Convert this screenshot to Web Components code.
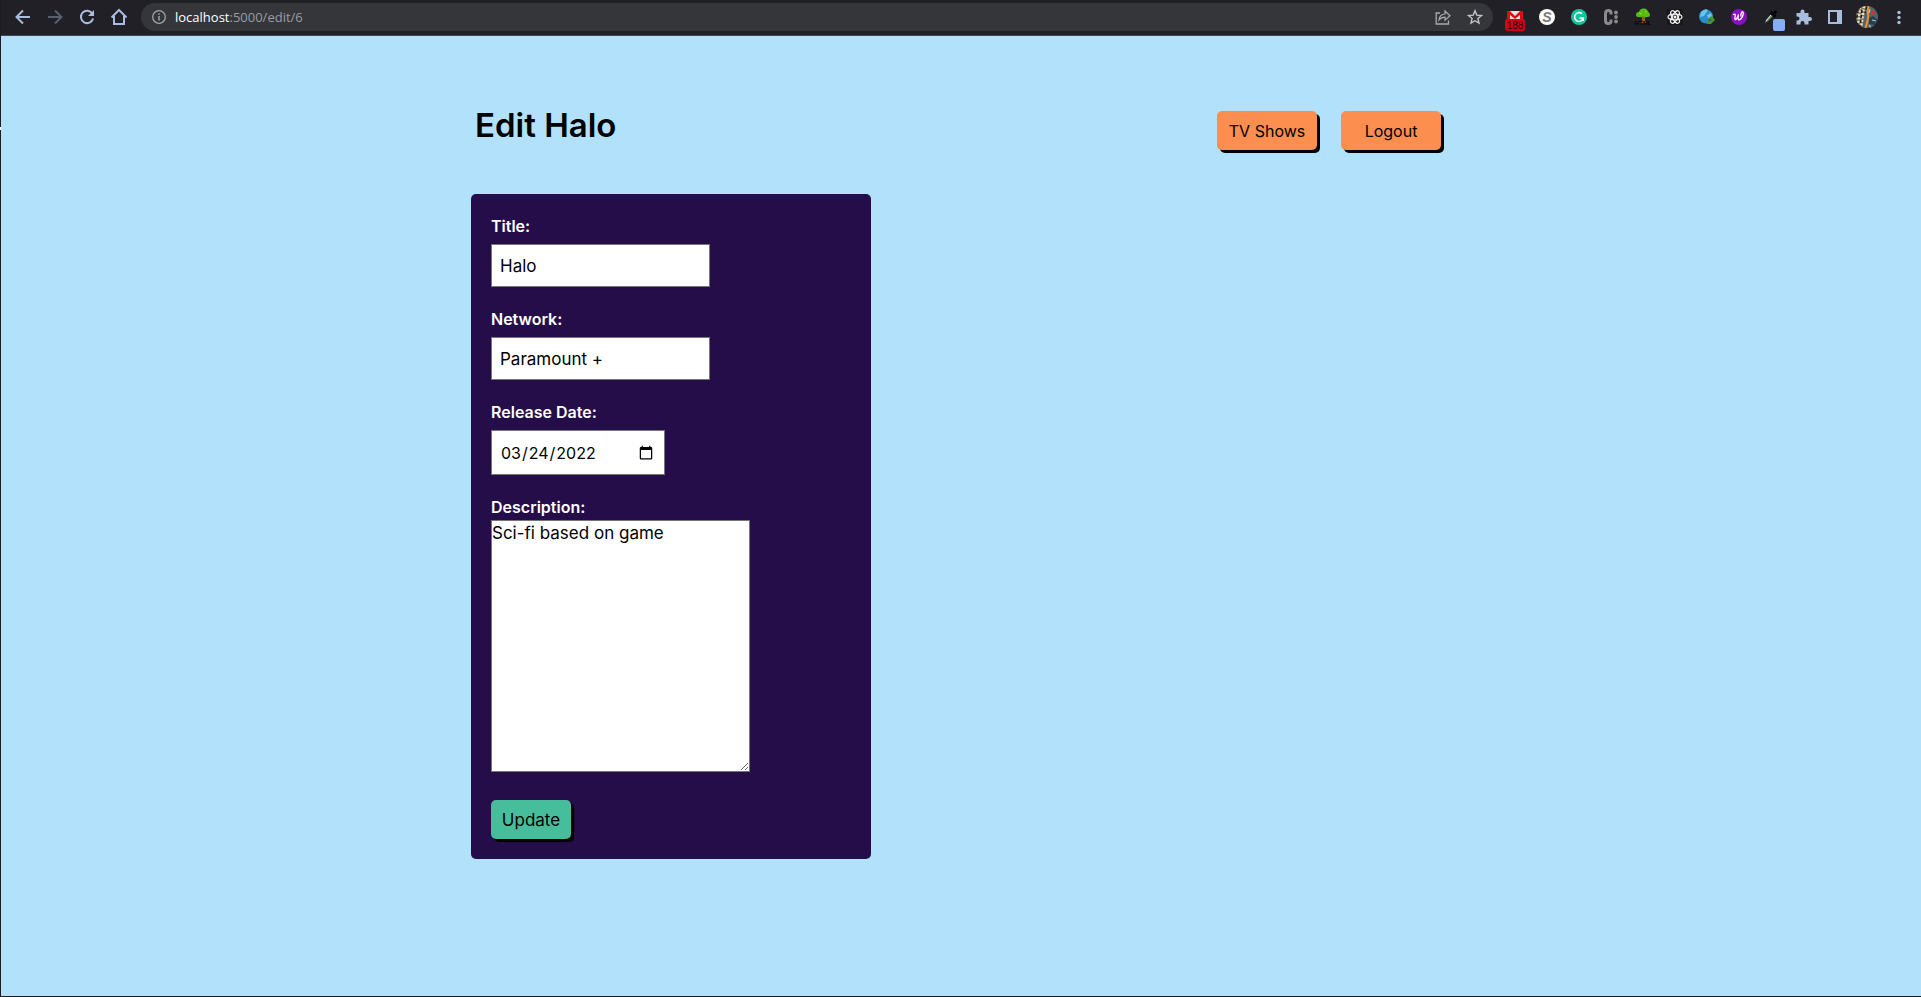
<!DOCTYPE html>
<html lang="en-US">
<head>
<meta charset="utf-8">
<title>Edit Halo</title>
<style>
  body { margin: 0; font: 16px/24px Inter, "Open Sans", sans-serif; color: #000; }
</style>
</head>
<body>
<app-window>
  <browser-bar slot="bar"></browser-bar>
  <page-header heading="Edit Halo">
    <push-button tone="orange">TV Shows</push-button>
    <push-button tone="orange">Logout</push-button>
  </page-header>
  <form-card>
    <form-field label="Title:" kind="text" value="Halo"></form-field>
    <form-field label="Network:" kind="text" value="Paramount +"></form-field>
    <form-field label="Release Date:" kind="date" value="2022-03-24"></form-field>
    <form-field label="Description:" kind="area" value="Sci-fi based on game"></form-field>
    <push-button slot="action" tone="green">Update</push-button>
  </form-card>
</app-window>

<script>
const render = (el, html) => { el.attachShadow({ mode: 'open' }).innerHTML = html; };

customElements.define('app-window', class extends HTMLElement {
  constructor() {
    super();
    render(this, `
      <style>
        :host { display: flex; flex-direction: column; position: relative; box-sizing: border-box; min-height: 100vh;
          background: #b1e1fb; border-left: 1px solid #1d1c22; border-bottom: 1px solid #1d1c22; }
        main { box-sizing: border-box; width: 980px; max-width: 100%; margin: 0 auto; padding: 64px 0; }
        .notch { position: absolute; left: -1px; top: 127px; width: 1px; height: 3px; background: #fff; }
      </style>
      <slot name="bar"></slot>
      <main><slot></slot></main>
      <span class="notch"></span>`);
  }
});

customElements.define('tool-icon', class extends HTMLElement {
  constructor() {
    super();
    render(this, `
      <style>
        :host { display: block; flex: none; }
        button { display: grid; place-items: center; width: 32px; height: 34px; padding: 0; border: 0; background: none; color: inherit; }
        ::slotted(svg) { display: block; width: 24px; height: 24px; overflow: visible; }
      </style>
      <button type="button"><slot></slot></button>`);
  }
  connectedCallback() { this.shadowRoot.querySelector('button').ariaLabel = this.getAttribute('name'); }
});

const icon = (name, body) => `<tool-icon name="${name}"><svg viewBox="0 0 24 24" fill="none">${body}</svg></tool-icon>`;

customElements.define('browser-bar', class extends HTMLElement {
  constructor() {
    super();
    render(this, `
      <style>
        :host { display: flex; align-items: center; box-sizing: border-box; height: 36px; padding: 0 6px 1px 6px;
          background: #202026; border-bottom: 1px solid #46464d; color: #a9bddd; }
        .address { display: flex; align-items: center; flex: 1; height: 28px; margin: 0 6px; padding: 0 2px;
          border-radius: 14px; background: #35363a; color: #9a9ea4; font: 13px/20px "Open Sans", sans-serif; }
        .url { flex: 1; outline: none; white-space: nowrap; }
        .host { color: #fff; }
      </style>
      ${icon('Back', '<path d="M19 12H6M12 5.5 5.5 12l6.5 6.5" stroke="#a9bddd" stroke-width="2"/>')}
      ${icon('Forward', '<path d="M5 12h13M12 5.5l6.500 6.500-6.500 6.500" stroke="#566071" stroke-width="2"/>')}
      ${icon('Reload', '<path d="M17.300 8.500A6.200 6.200 0 1 0 18.100 13.500" stroke="#a9bddd" stroke-width="2"/><path d="M19 5v6h-6z" fill="#a9bddd"/>')}
      ${icon('Home', '<path d="M4.500 12.500 12 5l7.500 7.500M7 11v8h10v-8" stroke="#a9bddd" stroke-width="2"/>')}
      <div class="address">
        ${icon('Site information', '<circle cx="12" cy="12" r="6.300" stroke="#a0a4a9" stroke-width="1.300"/><path d="M12 11v4.500M12 8.300v1.500" stroke="#a0a4a9" stroke-width="1.500"/>')}
        <div class="url" role="textbox" contenteditable="true" spellcheck="false" aria-label="Address"><span class="host">localhost</span>:5000/edit/6</div>
        ${icon('Share', '<path d="M9 8H5.200v11h12.300v-3.500" stroke="#a9abaf" stroke-width="1.300"/><path d="M8 15c.4-4 2.600-5.800 6-6V6l5 4.700-5 4.500v-3c-2.600 0-4.500.8-6 2.800z" stroke="#a9abaf" stroke-width="1.200"/>')}
        ${icon('Bookmark', '<path d="m12 5.800 1.800 4.300 4.700.4-3.600 3 1.100 4.600-4-2.400-4 2.400 1.100-4.600-3.600-3 4.700-.4z" stroke="#c3c5c9" stroke-width="1.400"/>')}
      </div>
      ${icon('Mail', '<path d="M4 6h16v11H4z" fill="#e3e3e3"/><path d="M4 6h3l5 5 5-5h3v10h-3v-6l-5 4-5-4v6H4z" fill="#e00b17"/><rect x="2" y="14" width="20" height="12" rx="2" fill="#d10019"/><text x="12" y="24" text-anchor="middle" font-family="Liberation Sans" font-size="10" fill="#16060a">188</text>')}
      ${icon('Stylus', '<circle cx="12" cy="12" r="8" fill="#fff"/><text x="12" y="17" text-anchor="middle" font-family="Liberation Sans" font-weight="700" font-style="italic" font-size="14" fill="#777">S</text>')}
      ${icon('Grammar', '<circle cx="12" cy="12" r="8" fill="#15c39a"/><path d="M15 8.800A4.400 4.400 0 1 0 16.300 13H12.500M16.300 13v3" stroke="#fff" stroke-width="1.500"/>')}
      ${icon('Colour tool', '<path d="M12 9.500V8q0-2.500-2.700-2.500T6.500 8.500v7q0 3 2.800 3t2.700-2.500v-1.500" stroke="#8a8a8a" stroke-width="3"/><g fill="#8a8a8a"><circle cx="17" cy="7.500" r="1.900"/><circle cx="17" cy="12" r="1.900"/><circle cx="17" cy="16.500" r="1.900"/></g>')}
      ${icon('Tree', '<path d="M11 11h3v5l2 2H9l2-2z" fill="#9a601e"/><path d="M5 10q0-3 3-3 1-4 5-3.500 3 0 4 3 2 1 2 3.500t-3 2q-2 1-4-1-2 2-4 1-3 0-3-2z" fill="#55bd11"/><path d="M8 8l3 1m3-3 2 2" stroke="#8fe02a"/><text x="12" y="19.500" text-anchor="middle" font-family="Liberation Sans" font-weight="700" font-size="6" fill="#050505">HTML</text>')}
      ${icon('React', '<rect x="4" y="4" width="16" height="16" fill="#18181b"/><g stroke="#f3f3f3" stroke-width="1.200"><ellipse cx="12" cy="12" rx="7" ry="2.800"/><ellipse cx="12" cy="12" rx="7" ry="2.800" transform="rotate(60 12 12)"/><ellipse cx="12" cy="12" rx="7" ry="2.800" transform="rotate(120 12 12)"/></g><circle cx="12" cy="12" r="1.500" fill="#f3f3f3"/>')}
      ${icon('Globe', '<circle cx="11" cy="11.500" r="7" fill="#278fca"/><path d="M6 7q4-4 7-2l-2 3-2 3-4 1zM12 10l4-2 2 5-4 3z" fill="#6cc4e8"/><path d="M12 14l5-3 3 4-4 4h-4z" fill="#4c9428"/><circle cx="15" cy="15" r="1.300" fill="#226ca1"/>')}
      ${icon('Wave', '<circle cx="12" cy="12" r="8" fill="#8b10bd"/><path d="M6.500 9.500c2-1 2 .5 1.500 3s1 4 3.500-3c-.5 3-1 6 1.200 5.200 2.300-.7 4.300-6.200 3.300-7.700s-2.500 2-2 4" stroke="#fff" stroke-width="1.300" stroke-linecap="round"/>')}
      ${icon('Eyedropper', '<path d="m6 18 1-3 6-7 2 2-6.500 6.500z" fill="#668c6b"/><path d="m7 16 5-6" stroke="#dce9df"/><path d="m11.500 7.500 5 4M14 9.500 17.500 6" stroke="#050505" stroke-width="3"/><rect x="14" y="14" width="12" height="12" rx="2" fill="#84aef8"/>')}
      ${icon('Extensions', '<path d="M5.500 8h4V6.500a2 2 0 0 1 4 0V8h4v4H19a2 2 0 0 1 0 4h-1.500v3.500h-4V18a2 2 0 0 0-4 0v1.500h-4v-4H6.500a2 2 0 0 0 0-4h-1z" fill="#a9bddd"/>')}
      ${icon('Side panel', '<path fill-rule="evenodd" d="M5 5h14v14H5zm2 2v10h7V7z" fill="#a9bddd"/>')}
      ${icon('Profile', '<clipPath id="round"><circle cx="12" cy="12" r="11"/></clipPath><g clip-path="url(#round)"><path d="M0 0h24v24H0z" fill="#55646c"/><path d="M0 0h11L7 24H0z" fill="#8a744c"/><path d="M5 2 3 20M9 1 6 23" stroke="#e4e3de" stroke-width="2.500" stroke-dasharray="2 1.500"/><path d="M3 5 1 18M7 5 5 22M12 2l-2 6" stroke="#151a1d" stroke-width="1.500" stroke-dasharray="3 2"/><path d="M14 0q-2 5-1 9t-3 15" stroke="#f39125" stroke-width="2"/><path d="m18 4 2 5-4 1z" fill="#e52c31"/><path d="m14 13 4-2 5 4-3 5-6-1z" fill="#263f51"/><path d="m15 4-1 4m0 12 2 3m1-8 4 1" stroke="#b2c7ce" stroke-width="1.200"/></g>')}
      ${icon('Menu', '<g fill="#a9bddd"><circle cx="12" cy="7.500" r="1.700"/><circle cx="12" cy="12.500" r="1.700"/><circle cx="12" cy="17.500" r="1.700"/></g>')}
    `);
  }
});

customElements.define('page-header', class extends HTMLElement {
  constructor() {
    super();
    render(this, `
      <style>
        :host { display: flex; justify-content: space-between; align-items: flex-start; margin-bottom: 44px; padding: 0 10px 0 4px; }
        h1 { margin: 0; font-size: 33px; line-height: 50px; font-weight: 600; }
        nav { display: flex; gap: 24px; padding-top: 11px; --button-width: 100px; }
      </style>
      <h1></h1>
      <nav><slot></slot></nav>`);
  }
  connectedCallback() { this.shadowRoot.querySelector('h1').textContent = this.getAttribute('heading'); }
});

customElements.define('push-button', class extends HTMLElement {
  constructor() {
    super();
    render(this, `
      <style>
        :host { display: block; --fill: #fc8f4f; }
        :host([tone="green"]) { --fill: #46be9b; font-size: 17px; }
        button { box-sizing: border-box; min-width: var(--button-width, 80px); height: 39px; padding: 0 8px; border: 0;
          border-radius: 5px; background: var(--fill); box-shadow: 3px 3px 0 #000; color: #000; font: inherit; white-space: nowrap; cursor: pointer; }
      </style>
      <button type="button"><slot></slot></button>`);
  }
});

customElements.define('form-card', class extends HTMLElement {
  constructor() {
    super();
    render(this, `
      <style>
        :host { display: block; box-sizing: border-box; width: 400px; max-width: 100%; padding: 20px; border-radius: 5px; background: #250d49; color: #fff; }
        form { display: flex; flex-direction: column; gap: 20px; }
        .action { padding-top: 8px; }
      </style>
      <form><slot></slot><div class="action"><slot name="action"></slot></div></form>`);
  }
});

customElements.define('form-field', class extends HTMLElement {
  connectedCallback() {
    if (this.shadowRoot) return;
    const kind = this.getAttribute('kind');
    const control = kind === 'area' ? '<textarea id="control"></textarea>' : `<input id="control" type="${kind}">`;
    render(this, `
      <style>
        :host { display: flex; flex-direction: column; align-items: flex-start; gap: 6px; }
        :host([kind="area"]) { gap: 1px; }
        label { font-weight: 600; }
        input, textarea { box-sizing: border-box; max-width: 100%; margin: 0; border: 1px solid #767676; border-radius: 0; background: #fff; color: #000; font: inherit; font-size: 17px; }
        input { width: 219px; height: 43px; padding: 8px; }
        input[type="date"] { width: 174px; height: 45px; font-size: 16px; }
        textarea { width: 259px; height: 252px; padding: 0; }
      </style>
      <label for="control">${this.getAttribute('label')}</label>
      ${control}`);
    this.shadowRoot.getElementById('control').value = this.getAttribute('value');
  }
});
</script>
</body>
</html>
